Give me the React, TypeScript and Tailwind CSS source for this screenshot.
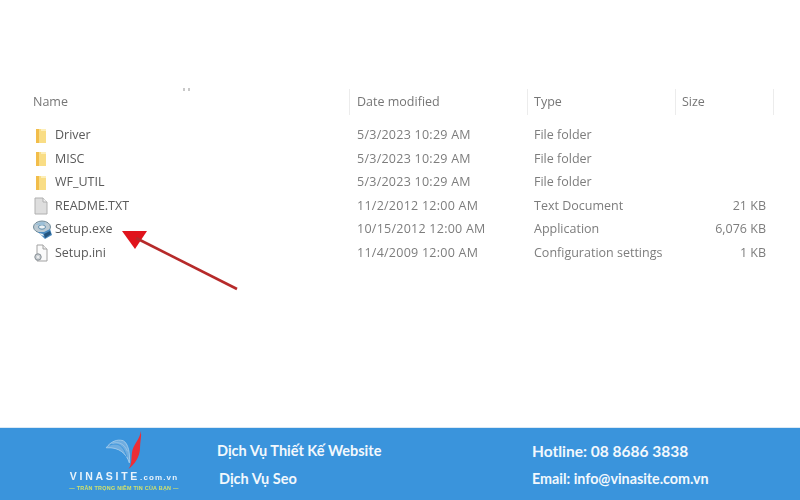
import React from "react";

const Folder = () => (
  <svg width="14" height="16" viewBox="0 0 14 16" className="blur-[0.6px]">
    <rect x="3" y="1" width="10" height="14" fill="#f9dd85" />
    <rect x="3" y="1" width="3" height="14" fill="#f2bd4a" />
    <rect x="8" y="1" width="5" height="2" fill="#fdeeb8" />
  </svg>
);

const Doc = () => (
  <svg width="16" height="18" viewBox="0 0 16 18" className="blur-[0.5px]">
    <path d="M2 1h8l4 4v12H2z" fill="#dedede" stroke="#b0b0b0" />
    <path d="M10 1v4h4" fill="#f2f2f2" stroke="#b0b0b0" />
  </svg>
);

const Setup = () => (
  <svg width="20" height="20" viewBox="0 0 20 20" className="blur-[0.5px]">
    <ellipse cx="9" cy="7" rx="8.5" ry="6" fill="#bccad3" stroke="#6f8a99" />
    <ellipse cx="9" cy="7" rx="3.5" ry="2.2" fill="#eef3f6" stroke="#5a8aa9" />
    <path d="M2 5c3-3 8-4 11-2l-3 2H5z" fill="#9cc0d8" />
    <path d="M5 12l7 7 7-4-2-6-6 3z" fill="#4a8abf" />
    <path d="M11 14l6-3 1 3-6 4z" fill="#24547e" />
    <path d="M6 13l4 1 1 2-3-1z" fill="#e9f0f4" />
  </svg>
);

const Ini = () => (
  <svg width="16" height="18" viewBox="0 0 16 18" className="blur-[0.5px]">
    <path d="M4 1h6l4 4v12H4z" fill="#fafafa" stroke="#a2a2a2" />
    <path d="M10 1v4h4" fill="#eeeeee" stroke="#a2a2a2" />
    <circle cx="5" cy="13" r="3.2" fill="#cdd2d6" stroke="#858d93" />
    <circle cx="5" cy="13" r="1" fill="#f5f5f5" />
  </svg>
);

const rows = [
  { name: "Driver", date: "5/3/2023 10:29 AM", type: "File folder", size: "", icon: <Folder /> },
  { name: "MISC", date: "5/3/2023 10:29 AM", type: "File folder", size: "", icon: <Folder /> },
  { name: "WF_UTIL", date: "5/3/2023 10:29 AM", type: "File folder", size: "", icon: <Folder /> },
  { name: "README.TXT", date: "11/2/2012 12:00 AM", type: "Text Document", size: "21 KB", icon: <Doc /> },
  { name: "Setup.exe", date: "10/15/2012 12:00 AM", type: "Application", size: "6,076 KB", icon: <Setup /> },
  { name: "Setup.ini", date: "11/4/2009 12:00 AM", type: "Configuration settings", size: "1 KB", icon: <Ini /> },
];

const cols = "grid grid-cols-[316px_178px_148px_99px]";

const Logo = () => (
  <div className="w-[110px] flex flex-col items-center">
    <svg width="42" height="40" viewBox="0 0 46 45" className="block">
      <path d="M3 20C8 13 15 10 22 12c6 3 8 15 7 25C26 27 18 19 3 20z" fill="#6fade0" stroke="#b9d8f0" strokeWidth="0.8" />
      <path d="M7 17c8-3 15-1 19 13" fill="none" stroke="#3a94dc" strokeWidth="1.1" />
      <path d="M10 15c7-2 13 0 17 9" fill="none" stroke="#a9cfec" strokeWidth="0.7" />
      <path d="M42 1C41 10 33 17 32 25c-1 8 0 13-4 19 7-5 13-14 13-24 0-7 2-13 1-19z" fill="#ec2d35" />
    </svg>
    <div className="font-['Liberation_Sans',sans-serif] font-bold text-[10.5px] leading-[12px] text-[#e8f3fb] tracking-[0.26em] whitespace-nowrap blur-[0.3px]">
      VINASITE<span className="text-[8px] tracking-[0.14em]">.com.vn</span>
    </div>
    <div className="font-['Liberation_Sans',sans-serif] text-[5.4px] leading-[8px] text-[#d3e26a] whitespace-nowrap tracking-[0.05em] blur-[0.2px]">
      — TRÂN TRỌNG NIỀM TIN CỦA BẠN —
    </div>
  </div>
);

export default function App() {
  return (
    <div className="w-[800px] h-[500px] flex flex-col bg-white overflow-hidden">
      <main className="relative flex-1 pt-[89px] pl-[33px] font-['Open_Sans',sans-serif] text-[12.5px] text-[#767676]">
        <div className="absolute left-[183px] top-[88px] w-[7px] h-[3px] border-x-2 border-[#c9c9c9]" />
        <div className={`${cols} h-[26px] items-stretch blur-[0.4px]`}>
          <div className="flex items-center">Name</div>
          <div className="flex items-center pl-[7px] border-l border-[#ececec]">Date modified</div>
          <div className="flex items-center pl-[6px] border-l border-[#ececec]">Type</div>
          <div className="flex items-center pl-[6px] border-x border-[#ececec]">Size</div>
        </div>
        <div className="mt-[9px]">
          {rows.map((r) => (
            <div key={r.name} className={`${cols} h-[23.5px] items-center blur-[0.4px]`}>
              <div className="flex items-center text-[#5a5a5a]">
                <span className="w-[22px] flex justify-start">{r.icon}</span>
                {r.name}
              </div>
              <div className="pl-[8px] text-[#7d7d7d] tracking-[0.25px]">{r.date}</div>
              <div className="pl-[7px] text-[#7d7d7d]">{r.type}</div>
              <div className="pr-[8px] text-right text-[#7d7d7d]">{r.size}</div>
            </div>
          ))}
        </div>
        <svg width="130" height="70" viewBox="0 0 130 70" className="absolute left-[120px] top-[228px] blur-[0.3px]">
          <path d="M2 3 L27 3 L15 21 Z" fill="#e0141c" />
          <path d="M16 10 L117 61" stroke="#b62a2a" strokeWidth="2.6" fill="none" />
        </svg>
      </main>
      <footer className="h-[73px] bg-[#3a94dc] border-t-[1px] border-[#dbe9f5] flex font-['Lato',sans-serif] font-bold text-[#f2f8fd]">
        <div className="ml-[69px] mt-[2px]"><Logo /></div>
        <div className="ml-[38px] w-[315px] pt-[13px] flex flex-col gap-[8px] text-[14.5px] leading-[20px]">
          <div>Dịch Vụ Thiết Kế Website</div>
          <div className="pl-[2px]">Dịch Vụ Seo</div>
        </div>
        <div className="pt-[13px] flex flex-col gap-[8px] leading-[20px]">
          <div className="text-[15.5px]">Hotline: 08 8686 3838</div>
          <div className="text-[14.3px]">Email: info@vinasite.com.vn</div>
        </div>
      </footer>
    </div>
  );
}
